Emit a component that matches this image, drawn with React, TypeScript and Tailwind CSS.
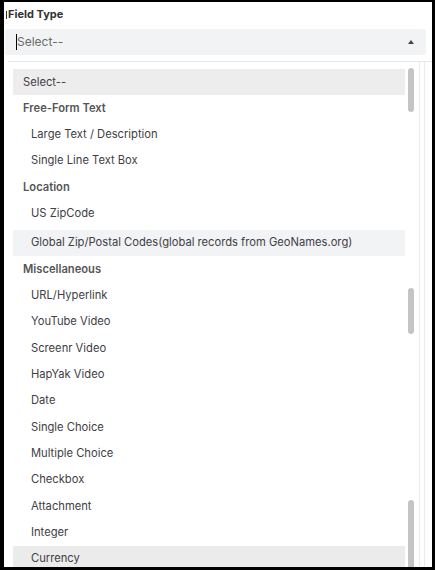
const groups: { label?: string; items: string[] }[] = [
  { label: "Free-Form Text", items: ["Large Text / Description", "Single Line Text Box"] },
  { label: "Location", items: ["US ZipCode", "Global Zip/Postal Codes(global records from GeoNames.org)"] },
  {
    label: "Miscellaneous",
    items: [
      "URL/Hyperlink",
      "YouTube Video",
      "Screenr Video",
      "HapYak Video",
      "Date",
      "Single Choice",
      "Multiple Choice",
      "Checkbox",
      "Attachment",
      "Integer",
      "Currency",
    ],
  },
];

const hovered = "Global Zip/Postal Codes(global records from GeoNames.org)";
const active = "Currency";

export default function App() {
  return (
    <div
      className="w-[435px] h-[570px] bg-white border-t-[2px] border-l-[4px] border-r-[3px] border-b-[3px] border-black overflow-hidden"
      style={{ fontFamily: "Inter, 'Noto Sans', sans-serif" }}
    >
      {/* Label */}
      <div className="flex items-center h-[22px] pt-[2px] pl-[2px]">
        <span className="w-[1px] h-[8px] bg-[#333] mr-[1px] mt-[1px]" />
        <span className="text-[11px] font-bold text-[#333]">Field Type</span>
      </div>

      {/* Select box */}
      <div className="mt-[5px] ml-[1px] mr-[6px] h-[26px] rounded-[3px] bg-[#f2f3f5] flex items-center pl-[11px] pr-[12px]">
        <span className="w-[1px] h-[16px] bg-black" />
        <span className="text-[12px] text-[#6b6b6b] flex-1">Select--</span>
        <svg width="6" height="4" viewBox="0 0 6 4" className="mb-[1px]">
          <path d="M0 4 L3 0 L6 4 Z" fill="#444" />
        </svg>
      </div>

      {/* Dropdown */}
      <div className="mt-[6px] ml-[4px] border-t border-[#e5e7eb] flex h-[600px]">
        <div className="pt-[7px] pl-[5px] w-[397px] text-[11.2px] text-[#404046]">
          <div className="h-[26px] flex items-center pl-[10px] bg-[#ededed]">Select--</div>
          {groups.map((g) => (
            <div key={g.label}>
              <div className="h-[26.33px] flex items-center pl-[10px] font-semibold text-[#555]">{g.label}</div>
              {g.items.map((it) => (
                <div
                  key={it}
                  className={
                    it === hovered
                      ? "h-[26.33px] mt-[3px] flex items-center pl-[18px] bg-[#f2f3f5]"
                      : it === active
                        ? "h-[26.33px] flex items-center pl-[18px] bg-[#ebebeb]"
                        : "h-[26.33px] flex items-center pl-[18px]"
                  }
                >
                  {it}
                </div>
              ))}
            </div>
          ))}
        </div>

        {/* Scrollbar */}
        <div className="ml-[3px] w-[6px] flex flex-col pt-[6px]">
          <div className="h-[44px] rounded-full bg-[#c4c4c4]" />
          <div className="mt-[176px] h-[46px] rounded-full bg-[#c4c4c4]" />
          <div className="mt-[166px] h-[90px] rounded-full bg-[#c4c4c4]" />
        </div>
        <div className="ml-[5px] w-[6px] border-l border-r border-[#ebebeb]" />
      </div>
    </div>
  );
}
